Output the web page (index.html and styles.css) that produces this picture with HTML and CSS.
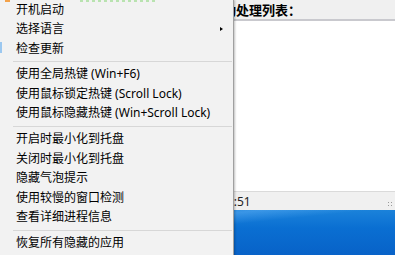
FILE: index.html
```html
<!DOCTYPE html>
<html lang="zh-CN">
<head>
<meta charset="utf-8">
<title>菜单</title>
<link rel="stylesheet" href="styles.css">
</head>
<body>
<div class="screen">
  <div class="window">
    <div class="win-head">自动处理列表：</div>
    <div class="win-list"></div>
    <div class="win-status">
      <span class="time">13:51</span>
      <span class="grip"></span>
    </div>
  </div>
  <div class="desktop"></div>

  <div class="menu">
    <span class="peek-orange"></span>
    <span class="peek-green"></span>
    <span class="peek-blue"></span>
    <div class="item">开机启动</div>
    <div class="item has-sub">选择语言<span class="arrow"></span></div>
    <div class="item">检查更新</div>
    <div class="sep"></div>
    <div class="item">使用全局热键 (Win+F6)</div>
    <div class="item">使用鼠标锁定热键 (Scroll Lock)</div>
    <div class="item">使用鼠标隐藏热键 (Win+Scroll Lock)</div>
    <div class="sep"></div>
    <div class="item">开启时最小化到托盘</div>
    <div class="item">关闭时最小化到托盘</div>
    <div class="item">隐藏气泡提示</div>
    <div class="item">使用较慢的窗口检测</div>
    <div class="item">查看详细进程信息</div>
    <div class="sep"></div>
    <div class="item">恢复所有隐藏的应用</div>
  </div>
</div>
</body>
</html>
```

FILE: styles.css
```css
html, body {
  margin: 0;
  padding: 0;
}
body {
  width: 395px;
  height: 255px;
  overflow: hidden;
  font-family: "Noto Sans", "Noto Sans CJK SC", sans-serif;
}
.screen {
  position: relative;
  width: 395px;
  height: 255px;
  display: flex;
  flex-direction: column;
  background: #fff;
}
.window {
  display: flex;
  flex-direction: column;
  height: 210px;
}
.win-head {
  height: 19px;
  background: #f0f0f0;
  border-bottom: 2px solid #c9c9ce;
  padding-left: 210px;
  font-family: "Noto Sans CJK SC", sans-serif;
  font-weight: 700;
  font-size: 13px;
  line-height: 19px;
  color: #000;
  white-space: nowrap;
}
.win-list {
  flex: 1;
  background: #fff;
}
.win-status {
  height: 18px;
  border-top: 1px solid #dadada;
  background: #f0f0f0;
  display: flex;
  align-items: center;
  justify-content: space-between;
  padding-left: 220px;
  padding-right: 3px;
  font-size: 12px;
  color: #222;
}
.grip {
  width: 5px;
  height: 5px;
  align-self: flex-end;
  margin-bottom: 4px;
  background:
    radial-gradient(circle, #999 0.8px, transparent 1px) 0 0 / 3px 3px;
}
.desktop {
  flex: 1;
  background:
    linear-gradient(174deg, rgba(255,255,255,0) 0%, rgba(255,255,255,0) 20%, rgba(120,190,255,0.35) 32%, rgba(255,255,255,0) 45%),
    linear-gradient(180deg, #1b82da 0%, #0a6fd2 40%, #0862c8 100%);
}

/* context menu overlaid on the window */
.menu {
  position: absolute;
  left: 0;
  top: -0.5px;
  width: 233px;
  bottom: -10px;
  background: #f2f2f2;
  box-shadow: 1px 0 0 #a0a0a0, 2px 0 2px rgba(0,0,0,0.25);
  display: flex;
  flex-direction: column;
  font-size: 12px;
  color: #000;
}
.peek-orange {
  position: absolute;
  left: 5px;
  top: 0;
  width: 5px;
  height: 2.5px;
  background: #f4a24a;
}
.peek-green {
  position: absolute;
  left: 80px;
  top: 0;
  width: 75px;
  height: 2px;
  background: repeating-linear-gradient(90deg, #b9e3b0 0 3px, transparent 3px 6px);
}
.peek-blue {
  position: absolute;
  left: 0;
  top: 42px;
  width: 2px;
  height: 11px;
  background: #9cc8f0;
}
.item {
  height: 19.6px;
  line-height: 19.6px;
  padding-left: 16px;
  white-space: nowrap;
  position: relative;
}
.arrow {
  position: absolute;
  left: 220px;
  top: 8px;
  width: 0;
  height: 0;
  border-top: 2.5px solid transparent;
  border-bottom: 2.5px solid transparent;
  border-left: 3px solid #000;
}
.sep {
  height: 6px;
  margin-left: 13px;
  margin-right: 1px;
  background: linear-gradient(#d7d7d7, #d7d7d7) 0 3px / 100% 1px no-repeat;
}
```
